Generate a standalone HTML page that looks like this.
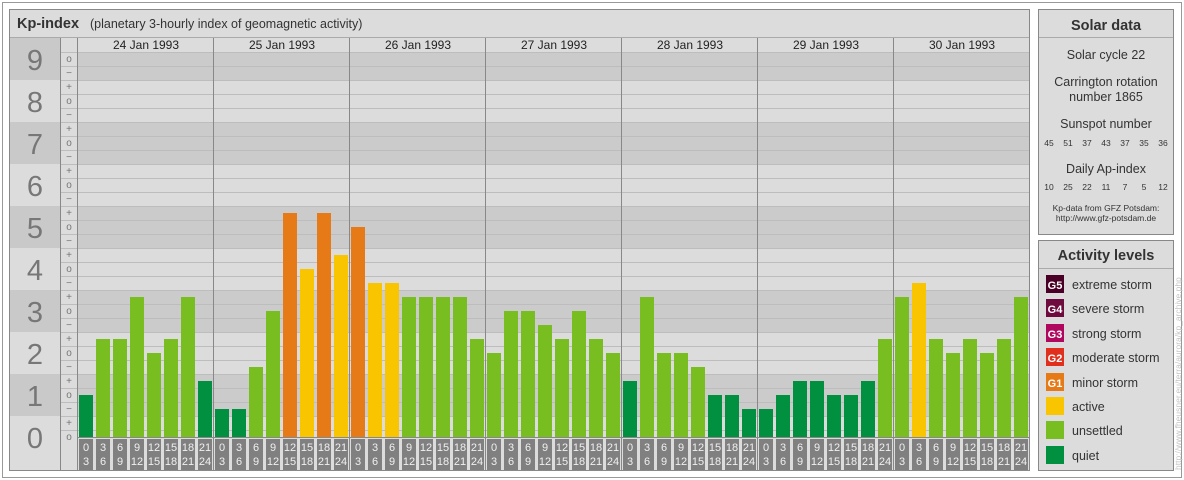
<!DOCTYPE html>
<html><head><meta charset="utf-8"><style>
body{margin:0;width:1184px;height:480px;background:#fff;font-family:"Liberation Sans",sans-serif;position:relative;overflow:hidden}
.lab{position:absolute;left:78px;top:439px;display:flex}
.lab div{width:14px;height:31px;margin:0 2px 0 1px;background:#808080;color:#f0f0f0;font-size:11px;line-height:14px;text-align:center;padding-top:2px;box-sizing:border-box}
</style></head><body>
<svg width="1184" height="480" style="position:absolute;left:0;top:0" font-family="Liberation Sans, sans-serif">
<rect x="2.5" y="2.5" width="1179" height="475" fill="#fff" stroke="#999"/>
<rect x="9.5" y="9.5" width="1020" height="461" fill="#dcdcdc" stroke="#888"/>
<line x1="10" y1="37.5" x2="1029" y2="37.5" stroke="#aaa"/>
<text x="17" y="28" font-size="14.5" font-weight="bold" fill="#333">Kp-index</text>
<text x="90" y="28" font-size="12.5" fill="#333">(planetary 3-hourly index of geomagnetic activity)</text>
<!-- digit bands -->
<g fill="#c9c9c9">
<rect x="10" y="38" width="50" height="42"/>
<rect x="10" y="122" width="50" height="42"/>
<rect x="10" y="206" width="50" height="42"/>
<rect x="10" y="290" width="50" height="42"/>
<rect x="10" y="374" width="50" height="42"/>
</g>
<g fill="#cbcbcb">
<rect x="78" y="52" width="951" height="28"/>
<rect x="78" y="122" width="951" height="42"/>
<rect x="78" y="206" width="951" height="42"/>
<rect x="78" y="290" width="951" height="42"/>
<rect x="78" y="374" width="951" height="42"/>
</g>
<g stroke="#bdbdbd" stroke-width="1">
<line x1="78" x2="1029" y1="52.5" y2="52.5"/><line x1="78" x2="1029" y1="66.5" y2="66.5"/><line x1="78" x2="1029" y1="80.5" y2="80.5"/><line x1="78" x2="1029" y1="94.5" y2="94.5"/><line x1="78" x2="1029" y1="108.5" y2="108.5"/><line x1="78" x2="1029" y1="122.5" y2="122.5"/><line x1="78" x2="1029" y1="136.5" y2="136.5"/><line x1="78" x2="1029" y1="150.5" y2="150.5"/><line x1="78" x2="1029" y1="164.5" y2="164.5"/><line x1="78" x2="1029" y1="178.5" y2="178.5"/><line x1="78" x2="1029" y1="192.5" y2="192.5"/><line x1="78" x2="1029" y1="206.5" y2="206.5"/><line x1="78" x2="1029" y1="220.5" y2="220.5"/><line x1="78" x2="1029" y1="234.5" y2="234.5"/><line x1="78" x2="1029" y1="248.5" y2="248.5"/><line x1="78" x2="1029" y1="262.5" y2="262.5"/><line x1="78" x2="1029" y1="276.5" y2="276.5"/><line x1="78" x2="1029" y1="290.5" y2="290.5"/><line x1="78" x2="1029" y1="304.5" y2="304.5"/><line x1="78" x2="1029" y1="318.5" y2="318.5"/><line x1="78" x2="1029" y1="332.5" y2="332.5"/><line x1="78" x2="1029" y1="346.5" y2="346.5"/><line x1="78" x2="1029" y1="360.5" y2="360.5"/><line x1="78" x2="1029" y1="374.5" y2="374.5"/><line x1="78" x2="1029" y1="388.5" y2="388.5"/><line x1="78" x2="1029" y1="402.5" y2="402.5"/><line x1="78" x2="1029" y1="416.5" y2="416.5"/><line x1="78" x2="1029" y1="430.5" y2="430.5"/>
<line x1="60" x2="78" y1="52.5" y2="52.5"/><line x1="60" x2="78" y1="66.5" y2="66.5"/><line x1="60" x2="78" y1="80.5" y2="80.5"/><line x1="60" x2="78" y1="94.5" y2="94.5"/><line x1="60" x2="78" y1="108.5" y2="108.5"/><line x1="60" x2="78" y1="122.5" y2="122.5"/><line x1="60" x2="78" y1="136.5" y2="136.5"/><line x1="60" x2="78" y1="150.5" y2="150.5"/><line x1="60" x2="78" y1="164.5" y2="164.5"/><line x1="60" x2="78" y1="178.5" y2="178.5"/><line x1="60" x2="78" y1="192.5" y2="192.5"/><line x1="60" x2="78" y1="206.5" y2="206.5"/><line x1="60" x2="78" y1="220.5" y2="220.5"/><line x1="60" x2="78" y1="234.5" y2="234.5"/><line x1="60" x2="78" y1="248.5" y2="248.5"/><line x1="60" x2="78" y1="262.5" y2="262.5"/><line x1="60" x2="78" y1="276.5" y2="276.5"/><line x1="60" x2="78" y1="290.5" y2="290.5"/><line x1="60" x2="78" y1="304.5" y2="304.5"/><line x1="60" x2="78" y1="318.5" y2="318.5"/><line x1="60" x2="78" y1="332.5" y2="332.5"/><line x1="60" x2="78" y1="346.5" y2="346.5"/><line x1="60" x2="78" y1="360.5" y2="360.5"/><line x1="60" x2="78" y1="374.5" y2="374.5"/><line x1="60" x2="78" y1="388.5" y2="388.5"/><line x1="60" x2="78" y1="402.5" y2="402.5"/><line x1="60" x2="78" y1="416.5" y2="416.5"/><line x1="60" x2="78" y1="430.5" y2="430.5"/>
</g>
<g stroke="#888"><line x1="60.5" y1="38" x2="60.5" y2="470"/><line x1="77.5" y1="38" x2="77.5" y2="470"/>
<line x1="213.5" y1="38" x2="213.5" y2="470"/><line x1="349.5" y1="38" x2="349.5" y2="470"/><line x1="485.5" y1="38" x2="485.5" y2="470"/><line x1="621.5" y1="38" x2="621.5" y2="470"/><line x1="757.5" y1="38" x2="757.5" y2="470"/><line x1="893.5" y1="38" x2="893.5" y2="470"/>
<line x1="78" y1="437.5" x2="1029" y2="437.5"/></g>
<g font-size="12" fill="#222" text-anchor="middle">
<text x="146" y="49">24 Jan 1993</text><text x="282" y="49">25 Jan 1993</text><text x="418" y="49">26 Jan 1993</text><text x="554" y="49">27 Jan 1993</text><text x="690" y="49">28 Jan 1993</text><text x="826" y="49">29 Jan 1993</text><text x="962" y="49">30 Jan 1993</text>
</g>
<g font-size="29" fill="#777" text-anchor="middle">
<text x="35" y="70">9</text><text x="35" y="112">8</text><text x="35" y="154">7</text><text x="35" y="196">6</text><text x="35" y="238">5</text><text x="35" y="280">4</text><text x="35" y="322">3</text><text x="35" y="364">2</text><text x="35" y="406">1</text><text x="35" y="448">0</text>
</g>
<g font-size="10" fill="#777" text-anchor="middle">
<text x="69" y="62">o</text><text x="69" y="76">−</text>
<text x="69" y="90">+</text><text x="69" y="104">o</text><text x="69" y="118">−</text>
<text x="69" y="132">+</text><text x="69" y="146">o</text><text x="69" y="160">−</text>
<text x="69" y="174">+</text><text x="69" y="188">o</text><text x="69" y="202">−</text>
<text x="69" y="216">+</text><text x="69" y="230">o</text><text x="69" y="244">−</text>
<text x="69" y="258">+</text><text x="69" y="272">o</text><text x="69" y="286">−</text>
<text x="69" y="300">+</text><text x="69" y="314">o</text><text x="69" y="328">−</text>
<text x="69" y="342">+</text><text x="69" y="356">o</text><text x="69" y="370">−</text>
<text x="69" y="384">+</text><text x="69" y="398">o</text><text x="69" y="412">−</text>
<text x="69" y="426">+</text><text x="69" y="440">o</text>
</g>
<!-- bars -->
<g>
<rect x="79" y="395" width="14" height="42" fill="#00903f"/>
<rect x="96" y="339" width="14" height="98" fill="#78be20"/>
<rect x="113" y="339" width="14" height="98" fill="#78be20"/>
<rect x="130" y="297" width="14" height="140" fill="#78be20"/>
<rect x="147" y="353" width="14" height="84" fill="#78be20"/>
<rect x="164" y="339" width="14" height="98" fill="#78be20"/>
<rect x="181" y="297" width="14" height="140" fill="#78be20"/>
<rect x="198" y="381" width="14" height="56" fill="#00903f"/>
<rect x="215" y="409" width="14" height="28" fill="#00903f"/>
<rect x="232" y="409" width="14" height="28" fill="#00903f"/>
<rect x="249" y="367" width="14" height="70" fill="#78be20"/>
<rect x="266" y="311" width="14" height="126" fill="#78be20"/>
<rect x="283" y="213" width="14" height="224" fill="#e67a17"/>
<rect x="300" y="269" width="14" height="168" fill="#f9c400"/>
<rect x="317" y="213" width="14" height="224" fill="#e67a17"/>
<rect x="334" y="255" width="14" height="182" fill="#f9c400"/>
<rect x="351" y="227" width="14" height="210" fill="#e67a17"/>
<rect x="368" y="283" width="14" height="154" fill="#f9c400"/>
<rect x="385" y="283" width="14" height="154" fill="#f9c400"/>
<rect x="402" y="297" width="14" height="140" fill="#78be20"/>
<rect x="419" y="297" width="14" height="140" fill="#78be20"/>
<rect x="436" y="297" width="14" height="140" fill="#78be20"/>
<rect x="453" y="297" width="14" height="140" fill="#78be20"/>
<rect x="470" y="339" width="14" height="98" fill="#78be20"/>
<rect x="487" y="353" width="14" height="84" fill="#78be20"/>
<rect x="504" y="311" width="14" height="126" fill="#78be20"/>
<rect x="521" y="311" width="14" height="126" fill="#78be20"/>
<rect x="538" y="325" width="14" height="112" fill="#78be20"/>
<rect x="555" y="339" width="14" height="98" fill="#78be20"/>
<rect x="572" y="311" width="14" height="126" fill="#78be20"/>
<rect x="589" y="339" width="14" height="98" fill="#78be20"/>
<rect x="606" y="353" width="14" height="84" fill="#78be20"/>
<rect x="623" y="381" width="14" height="56" fill="#00903f"/>
<rect x="640" y="297" width="14" height="140" fill="#78be20"/>
<rect x="657" y="353" width="14" height="84" fill="#78be20"/>
<rect x="674" y="353" width="14" height="84" fill="#78be20"/>
<rect x="691" y="367" width="14" height="70" fill="#78be20"/>
<rect x="708" y="395" width="14" height="42" fill="#00903f"/>
<rect x="725" y="395" width="14" height="42" fill="#00903f"/>
<rect x="742" y="409" width="14" height="28" fill="#00903f"/>
<rect x="759" y="409" width="14" height="28" fill="#00903f"/>
<rect x="776" y="395" width="14" height="42" fill="#00903f"/>
<rect x="793" y="381" width="14" height="56" fill="#00903f"/>
<rect x="810" y="381" width="14" height="56" fill="#00903f"/>
<rect x="827" y="395" width="14" height="42" fill="#00903f"/>
<rect x="844" y="395" width="14" height="42" fill="#00903f"/>
<rect x="861" y="381" width="14" height="56" fill="#00903f"/>
<rect x="878" y="339" width="14" height="98" fill="#78be20"/>
<rect x="895" y="297" width="14" height="140" fill="#78be20"/>
<rect x="912" y="283" width="14" height="154" fill="#f9c400"/>
<rect x="929" y="339" width="14" height="98" fill="#78be20"/>
<rect x="946" y="353" width="14" height="84" fill="#78be20"/>
<rect x="963" y="339" width="14" height="98" fill="#78be20"/>
<rect x="980" y="353" width="14" height="84" fill="#78be20"/>
<rect x="997" y="339" width="14" height="98" fill="#78be20"/>
<rect x="1014" y="297" width="14" height="140" fill="#78be20"/>
</g>
<!-- Solar data -->
<rect x="1038.5" y="9.5" width="135" height="225" fill="#dcdcdc" stroke="#888"/>
<line x1="1039" y1="37.5" x2="1173" y2="37.5" stroke="#aaa"/>
<g text-anchor="middle" fill="#333">
<text x="1106" y="30" font-size="14.5" font-weight="bold">Solar data</text>
<text x="1106" y="59" font-size="12.5">Solar cycle 22</text>
<text x="1106" y="86" font-size="12.5">Carrington rotation</text>
<text x="1106" y="101" font-size="12.5">number 1865</text>
<text x="1106" y="128" font-size="12.5">Sunspot number</text>
<text x="1106" y="173" font-size="12.5">Daily Ap-index</text>
<text x="1106" y="211" font-size="8.5">Kp-data from GFZ Potsdam:</text>
<text x="1106" y="221" font-size="8.5">http://www.gfz-potsdam.de</text>
</g>
<g text-anchor="middle" fill="#333" font-size="8.5">
<text x="1049" y="146">45</text><text x="1068" y="146">51</text><text x="1087" y="146">37</text><text x="1106" y="146">43</text><text x="1125" y="146">37</text><text x="1144" y="146">35</text><text x="1163" y="146">36</text>
<text x="1049" y="190">10</text><text x="1068" y="190">25</text><text x="1087" y="190">22</text><text x="1106" y="190">11</text><text x="1125" y="190">7</text><text x="1144" y="190">5</text><text x="1163" y="190">12</text>
</g>
<!-- Activity -->
<rect x="1038.5" y="240.5" width="135" height="230" fill="#dcdcdc" stroke="#888"/>
<line x1="1039" y1="268.5" x2="1173" y2="268.5" stroke="#aaa"/>
<text x="1106" y="260" font-size="14.5" font-weight="bold" fill="#333" text-anchor="middle">Activity levels</text>
<g font-size="12.5" fill="#333">
<rect x="1046" y="275" width="18" height="18" fill="#4a0026"/><text x="1072" y="289">extreme storm</text>
<rect x="1046" y="299" width="18" height="18" fill="#6e0a3e"/><text x="1072" y="313">severe storm</text>
<rect x="1046" y="324" width="18" height="18" fill="#b0085e"/><text x="1072" y="338">strong storm</text>
<rect x="1046" y="348" width="18" height="18" fill="#e02f1c"/><text x="1072" y="362">moderate storm</text>
<rect x="1046" y="373" width="18" height="18" fill="#e67a17"/><text x="1072" y="387">minor storm</text>
<rect x="1046" y="397" width="18" height="18" fill="#f9c400"/><text x="1072" y="411">active</text>
<rect x="1046" y="421" width="18" height="18" fill="#78be20"/><text x="1072" y="435">unsettled</text>
<rect x="1046" y="446" width="18" height="18" fill="#00903f"/><text x="1072" y="460">quiet</text>
</g>
<g font-size="11" font-weight="bold" fill="#fff" text-anchor="middle">
<text x="1055" y="289">G5</text><text x="1055" y="313">G4</text><text x="1055" y="338">G3</text><text x="1055" y="362">G2</text><text x="1055" y="387">G1</text>
</g>
<text transform="translate(1181,470) rotate(-90)" font-size="8.5" fill="#c4c4c4">http://www.fheusner.eu/terra/aurora/kp_archive.php</text>
</svg>
<div class="lab">
<div>0<br>3</div><div>3<br>6</div><div>6<br>9</div><div>9<br>12</div><div>12<br>15</div><div>15<br>18</div><div>18<br>21</div><div>21<br>24</div>
<div>0<br>3</div><div>3<br>6</div><div>6<br>9</div><div>9<br>12</div><div>12<br>15</div><div>15<br>18</div><div>18<br>21</div><div>21<br>24</div>
<div>0<br>3</div><div>3<br>6</div><div>6<br>9</div><div>9<br>12</div><div>12<br>15</div><div>15<br>18</div><div>18<br>21</div><div>21<br>24</div>
<div>0<br>3</div><div>3<br>6</div><div>6<br>9</div><div>9<br>12</div><div>12<br>15</div><div>15<br>18</div><div>18<br>21</div><div>21<br>24</div>
<div>0<br>3</div><div>3<br>6</div><div>6<br>9</div><div>9<br>12</div><div>12<br>15</div><div>15<br>18</div><div>18<br>21</div><div>21<br>24</div>
<div>0<br>3</div><div>3<br>6</div><div>6<br>9</div><div>9<br>12</div><div>12<br>15</div><div>15<br>18</div><div>18<br>21</div><div>21<br>24</div>
<div>0<br>3</div><div>3<br>6</div><div>6<br>9</div><div>9<br>12</div><div>12<br>15</div><div>15<br>18</div><div>18<br>21</div><div>21<br>24</div>
</div>
</body></html>
